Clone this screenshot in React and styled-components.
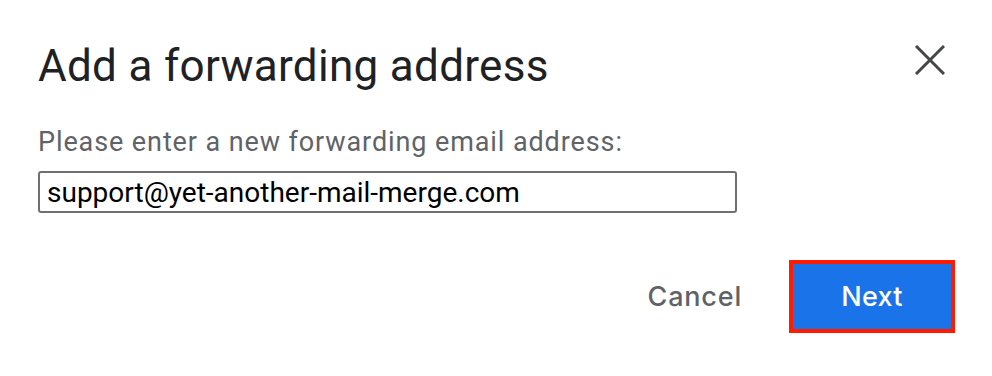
import React from "react";
import styled, { createGlobalStyle } from "styled-components";

const Global = createGlobalStyle`
  html, body { margin: 0; padding: 0; background: #ffffff; }
  body { width: 992px; height: 376px; overflow: hidden; }
`;

const Dialog = styled.div`
  box-sizing: border-box;
  width: 992px;
  height: 376px;
  padding: 40px 38px 0 38px;
  display: flex;
  flex-direction: column;
  font-family: Roboto, "Liberation Sans", sans-serif;
`;

const Header = styled.div`
  display: flex;
  align-items: flex-start;
  justify-content: space-between;
`;

const Title = styled.h1`
  margin: 0;
  font-family: Roboto, "Liberation Sans", sans-serif;
  font-weight: 400;
  font-size: 44px;
  line-height: 52px;
  letter-spacing: 0.3px;
  color: #202124;
`;

const CloseButton = styled.button`
  border: none;
  background: none;
  padding: 0;
  margin: 0 4px 0 0;
  width: 40px;
  height: 40px;
  display: flex;
  align-items: center;
  justify-content: center;
  cursor: pointer;
`;

const Label = styled.div`
  margin-top: 35px;
  font-size: 27px;
  line-height: 30px;
  letter-spacing: 0.9px;
  color: #5f6368;
`;

const Input = styled.input`
  box-sizing: border-box;
  margin-top: 14px;
  width: 699px;
  height: 42px;
  border: 2px solid #707070;
  border-radius: 3px;
  padding: 0 7px;
  font-family: Roboto, "Liberation Sans", sans-serif;
  font-size: 28px;
  color: #000000;
  outline: none;
`;

const Actions = styled.div`
  margin-top: 47px;
  display: flex;
  justify-content: flex-end;
  align-items: center;
  gap: 47px;
  margin-right: -1px;
`;

const TextButton = styled.button`
  border: none;
  background: none;
  padding: 0;
  font-family: Inter, "Open Sans", sans-serif;
  font-weight: 500;
  font-size: 27px;
  letter-spacing: 0.8px;
  color: #5f6368;
  cursor: pointer;
`;

const PrimaryButton = styled.button`
  box-sizing: border-box;
  width: 166px;
  height: 73px;
  border: 4px solid #ff1a00;
  background: #1a73e8;
  color: #ffffff;
  font-family: Inter, "Open Sans", sans-serif;
  font-weight: 500;
  font-size: 27px;
  letter-spacing: 0.3px;
  padding: 0;
  cursor: pointer;
`;

export default function App() {
  return (
    <>
      <Global />
      <Dialog>
        <Header>
          <Title>Add a forwarding address</Title>
          <CloseButton aria-label="Close">
            <svg width="30" height="30" viewBox="0 0 30 30">
              <path d="M1 1 L29 29 M29 1 L1 29" stroke="#444746" strokeWidth="3" strokeLinecap="butt" />
            </svg>
          </CloseButton>
        </Header>
        <Label>Please enter a new forwarding email address:</Label>
        <Input defaultValue="support@yet-another-mail-merge.com" />
        <Actions>
          <TextButton>Cancel</TextButton>
          <PrimaryButton>Next</PrimaryButton>
        </Actions>
      </Dialog>
    </>
  );
}
